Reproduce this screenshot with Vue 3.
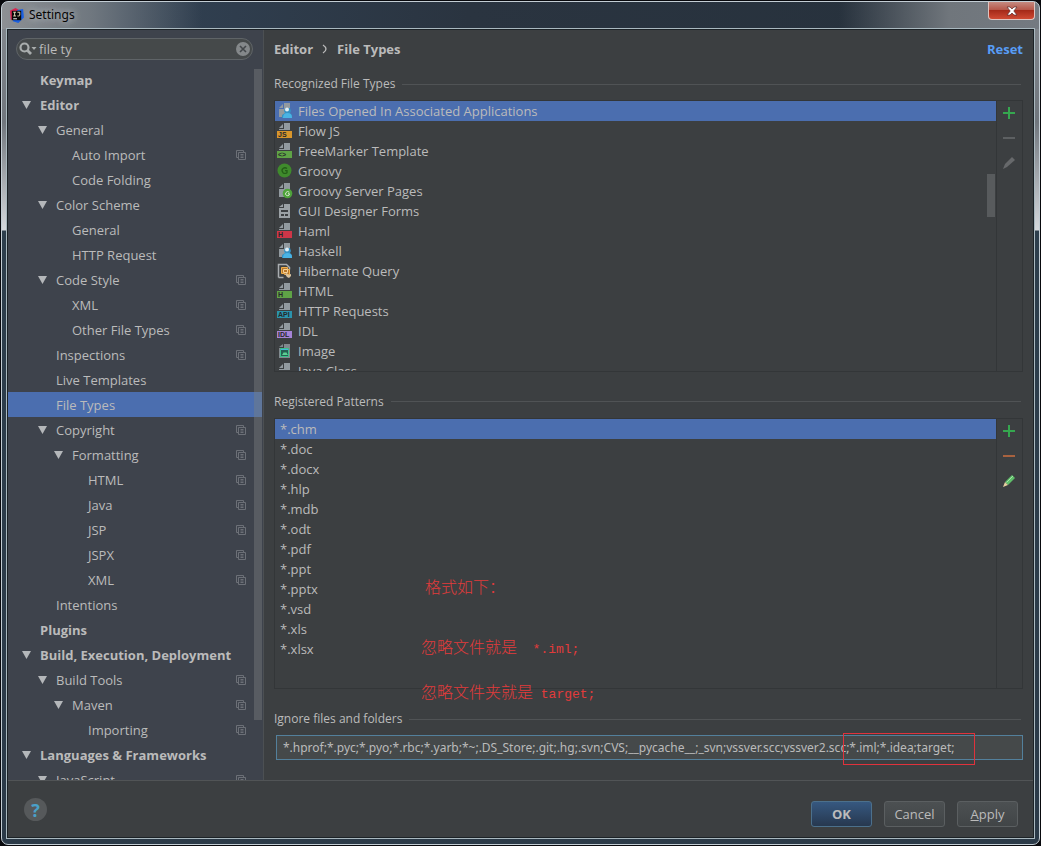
<script setup>
import { ref } from 'vue'

const query = ref('file ty')
const ignored = ref('*.hprof;*.pyc;*.pyo;*.rbc;*.yarb;*~;.DS_Store;.git;.hg;.svn;CVS;__pycache__;_svn;vssver.scc;vssver2.scc;*.iml;*.idea;target;')

const node = (label, level, open = false, project = false) => ({ label, level, open, project })
const tree = [
  node('Keymap', 0),
  node('Editor', 0, true),
  node('General', 1, true),
  node('Auto Import', 2, false, true),
  node('Code Folding', 2),
  node('Color Scheme', 1, true),
  node('General', 2),
  node('HTTP Request', 2),
  node('Code Style', 1, true, true),
  node('XML', 2, false, true),
  node('Other File Types', 2, false, true),
  node('Inspections', 1, false, true),
  node('Live Templates', 1),
  node('File Types', 1),
  node('Copyright', 1, true, true),
  node('Formatting', 2, true, true),
  node('HTML', 3, false, true),
  node('Java', 3, false, true),
  node('JSP', 3, false, true),
  node('JSPX', 3, false, true),
  node('XML', 3, false, true),
  node('Intentions', 1),
  node('Plugins', 0),
  node('Build, Execution, Deployment', 0, true),
  node('Build Tools', 1, true, true),
  node('Maven', 2, true, true),
  node('Importing', 3, false, true),
  node('Languages & Frameworks', 0, true),
  node('JavaScript', 1, true, true),
]
const selectedNode = ref(13)

const fileTypes = [
  { name: 'Files Opened In Associated Applications', kind: 'user' },
  { name: 'Flow JS', kind: 'band', color: '#d9962b', tag: 'JS' },
  { name: 'FreeMarker Template', kind: 'band', color: '#5fa346', tag: '<>' },
  { name: 'Groovy', kind: 'groovy' },
  { name: 'Groovy Server Pages', kind: 'gsp' },
  { name: 'GUI Designer Forms', kind: 'form' },
  { name: 'Haml', kind: 'band', color: '#cf3648', tag: 'H' },
  { name: 'Haskell', kind: 'user' },
  { name: 'Hibernate Query', kind: 'hibernate' },
  { name: 'HTML', kind: 'band', color: '#5fa346', tag: 'H' },
  { name: 'HTTP Requests', kind: 'band', color: '#2b93ad', tag: 'API' },
  { name: 'IDL', kind: 'band', color: '#a583d6', tag: 'IDL' },
  { name: 'Image', kind: 'image' },
  { name: 'Java Class', kind: 'band', color: '#5fa346', tag: 'J' },
]
const selectedType = ref(0)

const patterns = ['*.chm', '*.doc', '*.docx', '*.hlp', '*.mdb', '*.odt', '*.pdf', '*.ppt', '*.pptx', '*.vsd', '*.xls', '*.xlsx']
const selectedPattern = ref(0)
</script>

<template>
  <div class="desktop">
    <div class="window">
      <header class="titlebar">
        <svg class="logo" viewBox="0 0 16 16" aria-hidden="true">
          <path d="M1 3 7 0l5 3-4 6-6 4z" fill="#d8244f" />
          <path d="M9 2l6-1 1 9-6 6-6-2z" fill="#1b5fe0" />
          <rect x="3" y="3" width="10" height="10" fill="#080808" />
          <path d="M4.500 4.500h3M6 4.500v4M4.500 8.500h3M9 4.500h2.500v3q0 1-1 1H9" fill="none" stroke="#eee3c0" />
          <path d="M4.500 11.500h4" stroke="#fff" />
        </svg>
        <span class="title">Settings</span>
        <button class="close" aria-label="Close">
          <svg viewBox="0 0 12 10" aria-hidden="true">
            <path d="M1 1h3l2 2 2-2h3L7.800 5 11 9H8L6 7 4 9H1l3.200-4z" fill="#fff" stroke="#5a2a2a" stroke-width=".7" />
          </svg>
        </button>
      </header>

      <div class="dialog">
        <div class="body">
          <aside class="sidebar">
            <div class="search">
              <svg class="lens" viewBox="0 0 18 14" aria-hidden="true">
                <circle cx="5.500" cy="5.500" r="4" fill="none" stroke="#a9adad" stroke-width="2.200" />
                <path d="M8.300 8.300 12 12" stroke="#a9adad" stroke-width="2.800" />
                <path d="M12.500 5h5L15 8z" fill="#a9adad" />
              </svg>
              <input v-model="query" type="text" aria-label="Search settings" />
              <button class="clear" aria-label="Clear search">
                <svg viewBox="0 0 14 14" aria-hidden="true">
                  <circle cx="7" cy="7" r="7" fill="#84888a" />
                  <path d="M4 4l6 6M10 4l-6 6" stroke="#43474a" stroke-width="1.600" />
                </svg>
              </button>
            </div>
            <div class="tree-wrap">
              <ul class="tree">
                <li v-for="(n, i) in tree" :key="i">
                  <button class="node" :class="['level-' + n.level, { selected: i === selectedNode }]" @click="selectedNode = i">
                    <svg class="arrow" viewBox="0 0 10 10" aria-hidden="true">
                      <path v-if="n.open" d="M0 1h9L4.500 9z" fill="#b4b7ba" />
                    </svg>
                    <span class="node-label">{{ n.label }}</span>
                    <svg v-if="n.project" class="project" viewBox="0 0 10 10" aria-hidden="true">
                      <path d="M2.500 7.500h-2v-7h7v2M2.500 2.500h7v7h-7zM4.500 4.500h3M4.500 6h3M4.500 7.500h3" fill="none" stroke="#6c7077" />
                    </svg>
                  </button>
                </li>
              </ul>
              <div class="tree-scroll"></div>
            </div>
          </aside>

          <main class="content">
            <div class="crumbs">
              <h1>Editor <svg class="sep" viewBox="0 0 6 10" aria-hidden="true"><path d="M1 1q3 2 3 4T1 9" fill="none" stroke="#bbb" stroke-width="1.300" /></svg> File Types</h1>
              <a href="#" class="reset">Reset</a>
            </div>

            <h2 class="group">Recognized File Types</h2>
            <section class="panel">
              <ul class="list types">
                <li v-for="(t, i) in fileTypes" :key="t.name">
                  <button class="item" :class="{ selected: i === selectedType }" @click="selectedType = i">
                    <svg class="ficon" viewBox="0 0 16 16" aria-hidden="true">
                      <template v-if="t.kind === 'groovy'">
                        <circle cx="7.500" cy="7.500" r="7" fill="#3f8a2c" />
                        <path d="M10 5.500Q8 4 6 5.500T6 9.700q2 1.500 4 0V7.700H8" fill="none" stroke="#245d18" stroke-width="1.300" />
                      </template>
                      <template v-else-if="t.kind === 'hibernate'">
                        <path d="M1.500 14.500v-13h8l3 3v2M1.500 14.500h5" fill="none" stroke="#a9adb0" stroke-width="1.500" />
                        <path d="M4.500 4.500h6v2h2v5h-5v-1h-3z" fill="#b9782c" stroke="#f0b04c" />
                        <path d="M6.500 6.500h4v3h-4z" fill="none" stroke="#f5d29a" />
                        <path d="M8 11l2-1 1 2 3-1v2l-2 2-2-1z" fill="#d9c3a0" />
                      </template>
                      <template v-else-if="t.kind === 'form'">
                        <path d="M2 4l4-3v3zM7 1h6v14H2V5h5z" fill="#9ba1a5" />
                        <path d="M4 7h7v2H4zM4 11h3v2H4zM8 11h3v2H8z" fill="#3c3f41" />
                      </template>
                      <template v-else-if="t.kind === 'image'">
                        <path d="M2 4l4-3v3zM7 1h6v14H2V5h5z" fill="#81898e" />
                        <path d="M3.500 5.500h8v8h-8z" fill="#255f52" stroke="#39c08a" />
                        <path d="M4 6h7v1H4z" fill="#49b3df" />
                        <path d="M5 12l2-3 1 1 1-1 2 3z" fill="#5bd193" />
                      </template>
                      <template v-else>
                        <path d="M2 5l4-4v4zM7 0h6v14H2V6h5z" fill="#929a9f" />
                        <template v-if="t.kind === 'band'">
                          <path d="M0 7h16v9H0z" fill="#3c3f41" />
                          <path d="M0 8h15v7H0z" :fill="t.color" />
                          <text x="1" y="14" class="tag">{{ t.tag }}</text>
                        </template>
                        <template v-else-if="t.kind === 'gsp'">
                          <circle cx="10.500" cy="10.500" r="4.800" fill="#4fa33b" />
                          <path d="M12.300 9.200q-2-1.500-3.300.3t.3 2.800q1.500 1 3-.3v-1.300H11" fill="none" stroke="#d8e8cf" />
                        </template>
                        <template v-else>
                          <path d="M5 15v-3l3-2-1-2 1-3h5l1 3-1 2 2 2v3z" fill="#3592c4" />
                          <circle cx="10" cy="6.500" r="2" fill="#e2eef4" />
                          <path d="M6 15q0-5 4.500-5t4.500 5z" fill="#4ab4e4" />
                        </template>
                      </template>
                    </svg>
                    <span>{{ t.name }}</span>
                  </button>
                </li>
              </ul>
              <div class="list-scroll"></div>
              <div class="tools">
                <button aria-label="Add file type"><svg viewBox="0 0 14 14"><path d="M7 1v12M1 7h12" stroke="#35a74f" stroke-width="2" /></svg></button>
                <button aria-label="Remove file type" disabled><svg viewBox="0 0 14 14"><path d="M1 7h12" stroke="#5d6062" stroke-width="2" /></svg></button>
                <button aria-label="Edit file type" disabled><svg viewBox="0 0 14 14"><path d="M1 13l2-5 7-7 3 3-8 7z" fill="#67696b" /></svg></button>
              </div>
            </section>

            <h2 class="group">Registered Patterns</h2>
            <section class="panel">
              <ul class="list">
                <li v-for="(p, i) in patterns" :key="p">
                  <button class="item pattern" :class="{ selected: i === selectedPattern }" @click="selectedPattern = i">{{ p }}</button>
                </li>
              </ul>
              <div class="tools">
                <button aria-label="Add pattern"><svg viewBox="0 0 14 14"><path d="M7 1v12M1 7h12" stroke="#35a74f" stroke-width="2" /></svg></button>
                <button aria-label="Remove pattern"><svg viewBox="0 0 14 14"><path d="M1 7h12" stroke="#a8623f" stroke-width="2" /></svg></button>
                <button aria-label="Edit pattern">
                  <svg viewBox="0 0 14 14">
                    <path d="M3 8l7-7 3 3-7 7z" fill="#5fbf6a" />
                    <path d="M4.500 8.500l6.500-6.500" stroke="#a5e3a5" />
                    <path d="M1 13l2-5 3 3z" fill="#e6cfa0" />
                  </svg>
                </button>
              </div>
              <p class="note note-format">格式如下：</p>
              <p class="note note-file">忽略文件就是<span class="code">&nbsp;&nbsp;*.iml;</span></p>
              <p class="note note-folder">忽略文件夹就是<span class="code">&nbsp;target;</span></p>
            </section>

            <h2 class="group"><label for="ignored">Ignore files and folders</label></h2>
            <div class="field">
              <input id="ignored" v-model="ignored" type="text" />
              <div class="marker"></div>
            </div>
          </main>
        </div>

        <footer class="footer">
          <button class="help" aria-label="Help">?</button>
          <div class="actions">
            <button class="btn primary">OK</button>
            <button class="btn">Cancel</button>
            <button class="btn"><u>A</u>pply</button>
          </div>
        </footer>
      </div>
    </div>
  </div>
</template>

<style>
body {
  margin: 0;
  background: #08090d;
}
</style>

<style scoped>
* {
  box-sizing: border-box;
}
button,
input {
  font: inherit;
  color: inherit;
  border: 0;
  padding: 0;
  background: none;
  outline: none;
}
ul,
h1,
h2,
p {
  margin: 0;
  padding: 0;
  list-style: none;
}
svg {
  display: block;
  flex: none;
}
.desktop {
  height: 100vh;
  padding: 1px;
  background: #08090d;
  color: #bbbbbb;
  font: 13px/20px "Open Sans", "Noto Sans", "Noto Sans CJK SC", sans-serif;
}
.window {
  height: 100%;
  display: flex;
  flex-direction: column;
  padding: 0 4px 5px;
  border: 1px solid #c3cdd4;
  border-radius: 7px;
  background:
    linear-gradient(90deg, #8d9094 0, #6f777f 90px, rgba(52, 65, 80, 0) 200px) 0 0 / 100% 27px no-repeat,
    linear-gradient(270deg, #747a81 0, #70767c 90px, rgba(42, 52, 64, 0) 200px) 0 0 / 100% 27px no-repeat,
    linear-gradient(90deg, #34465a, #2a3440 45%, #26313c) 0 0 / 100% 27px no-repeat,
    linear-gradient(180deg, #858a90, #70767d 120px, #d5d8dc 228px, #2d3e4c 229px, #2b3a48);
}
.titlebar {
  display: flex;
  align-items: center;
  height: 26px;
  flex: none;
  padding-left: 3px;
}
.logo {
  width: 15px;
  height: 15px;
}
.title {
  margin-left: 5px;
  font-family: "Noto Sans", sans-serif;
  font-size: 12px;
  color: #050505;
  text-shadow: 0 0 6px #b9bcc0, 0 0 8px #a9adb2;
}
.close {
  display: grid;
  place-items: center;
  align-self: flex-start;
  width: 47px;
  height: 18px;
  margin-left: auto;
  border: 1px solid #dfc4c0;
  border-top: 0;
  border-radius: 0 0 4px 4px;
  background: linear-gradient(#c58a80, #b6584b 45%, #a52a19 50%, #cf4a33);
}
.close svg {
  width: 12px;
  height: 10px;
}
.dialog {
  flex: 1;
  min-height: 0;
  display: flex;
  flex-direction: column;
  border: 1px solid #a9b8bf;
  outline: 1px solid #1c2226;
  outline-offset: -2px;
  background: #3c3f41;
}
.body {
  flex: 1;
  min-height: 0;
  display: flex;
}
.sidebar {
  width: 257px;
  flex: none;
  display: flex;
  flex-direction: column;
  padding: 9px 1px 0;
  border-right: 1px solid #4c5053;
  background: #3e434c;
}
.search {
  display: flex;
  align-items: center;
  height: 22px;
  margin: 0 9px 7px 8px;
  padding: 0 2px;
  border: 1px solid #5f6467;
  border-radius: 11px;
  background: #45494a;
}
.lens {
  width: 18px;
  height: 14px;
}
.search input {
  flex: 1;
  min-width: 0;
  margin-left: 2px;
}
.clear svg {
  width: 14px;
  height: 14px;
}
.tree-wrap {
  position: relative;
  flex: 1;
  min-height: 0;
  overflow: hidden;
}
.node {
  display: flex;
  align-items: center;
  width: 100%;
  height: 25px;
  padding-right: 16px;
  text-align: left;
  white-space: nowrap;
}
.level-0 {
  padding-left: 14px;
  font-weight: bold;
}
.level-1 {
  padding-left: 30px;
}
.level-2 {
  padding-left: 46px;
}
.level-3 {
  padding-left: 62px;
}
.selected {
  background: #4b6eaf;
}
.arrow {
  width: 10px;
  height: 10px;
  margin-right: 8px;
}
.node-label {
  flex: 1;
}
.project {
  width: 10px;
  height: 10px;
}
.tree-scroll {
  position: absolute;
  top: 2px;
  right: 0;
  bottom: 60px;
  width: 8px;
  background: rgba(125, 128, 128, 0.42);
}
.content {
  flex: 1;
  min-width: 0;
  display: flex;
  flex-direction: column;
  padding: 10px 11px 20px 10px;
}
.crumbs {
  display: flex;
  justify-content: space-between;
  align-items: center;
  height: 20px;
  margin-bottom: 15px;
}
h1 {
  display: flex;
  align-items: center;
  gap: 9px;
  font-size: 13px;
  line-height: 20px;
}
.sep {
  width: 6px;
  height: 10px;
}
.reset {
  font-weight: bold;
  color: #589df6;
  text-decoration: none;
}
.group {
  display: flex;
  align-items: center;
  gap: 7px;
  height: 20px;
  flex: none;
  margin-bottom: 6px;
  font-size: 12px;
  font-weight: normal;
}
.group::after {
  content: "";
  flex: 1;
  height: 1px;
  margin-right: 2px;
  background: #505355;
}
.panel {
  position: relative;
  flex: 1;
  min-height: 0;
  display: flex;
  margin-bottom: 20px;
  border: 1px solid #333638;
}
.list {
  flex: 1;
  min-width: 0;
  overflow: hidden;
}
.item {
  display: flex;
  align-items: center;
  width: 100%;
  height: 20px;
  padding-left: 2px;
  text-align: left;
}
.pattern {
  padding-left: 5px;
}
.ficon {
  width: 16px;
  height: 16px;
  margin-right: 5px;
}
.tag {
  font: bold 7px "Liberation Sans", sans-serif;
  fill: #26292b;
}
.list-scroll {
  position: absolute;
  top: 27%;
  right: 27px;
  width: 8px;
  height: 16%;
  background: #585b5d;
}
.tools {
  display: flex;
  flex-direction: column;
  align-items: center;
  gap: 11px;
  width: 26px;
  padding: 5px 2px 0 0;
  border-left: 1px solid #333638;
}
.tools svg {
  width: 14px;
  height: 14px;
}
.note {
  position: absolute;
  font: 16px/20px "Noto Sans CJK SC", sans-serif;
  font-weight: 300;
  color: #e23b3b;
  white-space: nowrap;
}
.note-format {
  left: 150px;
  top: 157px;
}
.note-file {
  left: 146px;
  top: 217px;
}
.note-folder {
  left: 146px;
  top: 262px;
}
.code {
  font-family: "Liberation Mono", monospace;
  font-size: 13px;
}
.field {
  position: relative;
  height: 25px;
  flex: none;
  margin-left: 2px;
}
.field input {
  width: 100%;
  height: 25px;
  padding: 0 6px;
  border: 1px solid #53809c;
  background: #45494a;
  font-family: "Noto Sans", sans-serif;
  font-size: 12px;
}
.marker {
  position: absolute;
  right: 48px;
  top: -2px;
  width: 132px;
  height: 32px;
  border: 1px solid #e0323c;
}
.footer {
  display: flex;
  align-items: center;
  justify-content: space-between;
  height: 58px;
  flex: none;
  padding: 0 16px 0 17px;
  border-top: 1px solid #515456;
}
.help {
  width: 23px;
  height: 23px;
  border-radius: 50%;
  background: #56595b;
  color: #4aa0c8;
  font-size: 18px;
  font-weight: bold;
  line-height: 22px;
}
.actions {
  display: flex;
  gap: 12px;
  margin-top: 8px;
}
.btn {
  width: 61px;
  height: 26px;
  border: 1px solid #5b5f61;
  border-radius: 3px;
  background: linear-gradient(#4c5052, #414547);
}
.primary {
  border-color: #4c708c;
  background: linear-gradient(#365880, #27384f);
  font-weight: bold;
}
</style>
